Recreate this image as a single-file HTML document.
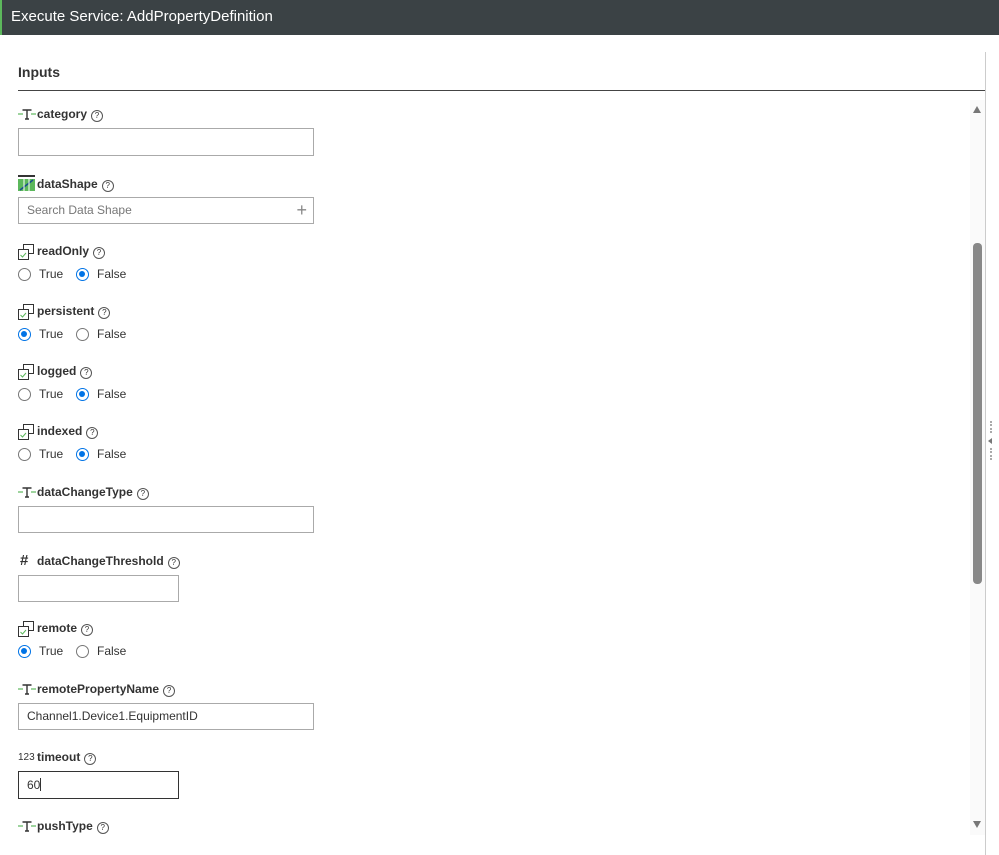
<!DOCTYPE html>
<html><head><style>
body{margin:0;width:999px;height:855px;background:#fff;font-family:"Liberation Sans",Arial,sans-serif;position:relative;overflow:hidden;color:#333}
.hdr{position:absolute;left:0;top:0;width:999px;height:35px;background:#3b4245;border-left:2px solid #5cb85c;box-sizing:border-box;color:#fff;font-size:15px;line-height:33px;padding-left:9px}
.a{position:absolute}
.lbl{position:absolute;left:37px;font-size:12px;font-weight:bold;line-height:14px;white-space:nowrap}
.q{display:inline-block;width:10px;height:10px;border:1px solid #555;border-radius:50%;font-size:8px;line-height:10px;text-align:center;font-weight:normal;margin-left:4px;vertical-align:0px}
.in{position:absolute;left:18px;border:1px solid #aaa;box-sizing:border-box;background:#fff;font-size:12px;padding-left:8px;color:#333}
.r{position:absolute;font-size:12px;line-height:14px;color:#333}
.rc{position:absolute;width:13px;height:13px;border:1px solid #777;border-radius:50%;box-sizing:border-box}
.rc.on{border:1.5px solid #0073e6}
.rc.on::after{content:"";position:absolute;left:2px;top:2px;width:6px;height:6px;border-radius:50%;background:#0073e6}
</style></head><body>
<div class="hdr">Execute Service: AddPropertyDefinition</div>
<div class="a" style="left:18px;top:64px;font-size:14px;font-weight:bold;color:#333">Inputs</div>
<div class="a" style="left:18px;top:90px;width:967px;height:1px;background:#444"></div>
<div class="a" style="left:985px;top:52px;width:1px;height:803px;background:#ccc"></div>
<div class="a" style="left:970px;top:100px;width:15px;height:735px;background:#fafafa"></div>
<div class="a" style="left:973px;top:243px;width:9px;height:341px;background:#888;border-radius:4px"></div>
<div class="a" style="left:973px;top:106px;width:0;height:0;border-left:4px solid transparent;border-right:4px solid transparent;border-bottom:7px solid #777"></div>
<div class="a" style="left:973px;top:821px;width:0;height:0;border-left:4px solid transparent;border-right:4px solid transparent;border-top:7px solid #777"></div>
<div class="a" style="left:990px;top:421px;width:2px;height:12px;border-left:2px dotted #aaa"></div>
<div class="a" style="left:990px;top:448px;width:2px;height:12px;border-left:2px dotted #aaa"></div>
<div class="a" style="left:988px;top:438px;width:0;height:0;border-top:3px solid transparent;border-bottom:3px solid transparent;border-right:4px solid #777"></div>

<svg width="0" height="0" style="position:absolute"><defs>
<g id="ti"><line x1="0" y1="7" x2="5" y2="7" stroke="#5cb85c" stroke-width="1.2"/><line x1="13" y1="7" x2="18" y2="7" stroke="#5cb85c" stroke-width="1.2"/><path d="M4.5 3 H13.5 M9 3 V12 M7 12 H11" stroke="#333" stroke-width="1.4" fill="none"/></g>
<g id="bi"><rect x="5.5" y="0.5" width="10" height="9" fill="#fff" stroke="#333"/><rect x="0.5" y="5.5" width="10" height="10" fill="#fff" stroke="#333"/><path d="M2.5 11 L4.5 13 L8 9" stroke="#5cb85c" fill="none"/></g>
</defs></svg>

<svg class="a" style="left:18px;top:107px" width="18" height="14"><use href="#ti"/></svg>
<div class="lbl" style="top:107px">category<span class="q">?</span></div>
<div class="in" style="top:128px;width:296px;height:28px"></div>

<svg class="a" style="left:18px;top:175px" width="17" height="16"><rect x="0" y="0" width="17" height="2" fill="#333"/><rect x="0" y="4" width="17" height="12" fill="#5cb85c"/><line x1="2" y1="15" x2="15" y2="5" stroke="#1a4f8c" stroke-width="1.5"/><line x1="6" y1="4" x2="6" y2="16" stroke="#fff"/><line x1="11" y1="4" x2="11" y2="16" stroke="#fff"/></svg>
<div class="lbl" style="top:177px">dataShape<span class="q">?</span></div>
<div class="in" style="top:197px;width:296px;height:27px;line-height:25px;color:#777">Search Data Shape<span style="position:absolute;right:6px;top:0;font-size:18px;color:#888">+</span></div>

<svg class="a" style="left:18px;top:244px" width="17" height="17"><use href="#bi"/></svg>
<div class="lbl" style="top:244px">readOnly<span class="q">?</span></div>
<div class="rc" style="left:18px;top:268px"></div><div class="r" style="left:39px;top:267px">True</div>
<div class="rc on" style="left:76px;top:268px"></div><div class="r" style="left:97px;top:267px">False</div>

<svg class="a" style="left:18px;top:304px" width="17" height="17"><use href="#bi"/></svg>
<div class="lbl" style="top:304px">persistent<span class="q">?</span></div>
<div class="rc on" style="left:18px;top:328px"></div><div class="r" style="left:39px;top:327px">True</div>
<div class="rc" style="left:76px;top:328px"></div><div class="r" style="left:97px;top:327px">False</div>

<svg class="a" style="left:18px;top:364px" width="17" height="17"><use href="#bi"/></svg>
<div class="lbl" style="top:364px">logged<span class="q">?</span></div>
<div class="rc" style="left:18px;top:388px"></div><div class="r" style="left:39px;top:387px">True</div>
<div class="rc on" style="left:76px;top:388px"></div><div class="r" style="left:97px;top:387px">False</div>

<svg class="a" style="left:18px;top:424px" width="17" height="17"><use href="#bi"/></svg>
<div class="lbl" style="top:424px">indexed<span class="q">?</span></div>
<div class="rc" style="left:18px;top:448px"></div><div class="r" style="left:39px;top:447px">True</div>
<div class="rc on" style="left:76px;top:448px"></div><div class="r" style="left:97px;top:447px">False</div>

<svg class="a" style="left:18px;top:485px" width="18" height="14"><use href="#ti"/></svg>
<div class="lbl" style="top:485px">dataChangeType<span class="q">?</span></div>
<div class="in" style="top:506px;width:296px;height:27px"></div>

<div class="a" style="left:20px;top:552px;font-size:15px;font-weight:bold">#</div>
<div class="lbl" style="top:554px">dataChangeThreshold<span class="q">?</span></div>
<div class="in" style="top:575px;width:161px;height:27px"></div>

<svg class="a" style="left:18px;top:621px" width="17" height="17"><use href="#bi"/></svg>
<div class="lbl" style="top:621px">remote<span class="q">?</span></div>
<div class="rc on" style="left:18px;top:645px"></div><div class="r" style="left:39px;top:644px">True</div>
<div class="rc" style="left:76px;top:645px"></div><div class="r" style="left:97px;top:644px">False</div>

<svg class="a" style="left:18px;top:682px" width="18" height="14"><use href="#ti"/></svg>
<div class="lbl" style="top:682px">remotePropertyName<span class="q">?</span></div>
<div class="in" style="top:703px;width:296px;height:27px;line-height:25px">Channel1.Device1.EquipmentID</div>

<div class="a" style="left:18px;top:752px;font-size:10px">123</div>
<div class="lbl" style="top:750px">timeout<span class="q">?</span></div>
<div class="in" style="top:771px;width:161px;height:28px;line-height:26px;border-color:#333">60<span style="border-left:1px solid #333;height:13px;display:inline-block;vertical-align:-2px"></span></div>

<svg class="a" style="left:18px;top:819px" width="18" height="14"><use href="#ti"/></svg>
<div class="lbl" style="top:819px">pushType<span class="q">?</span></div>
</body></html>
